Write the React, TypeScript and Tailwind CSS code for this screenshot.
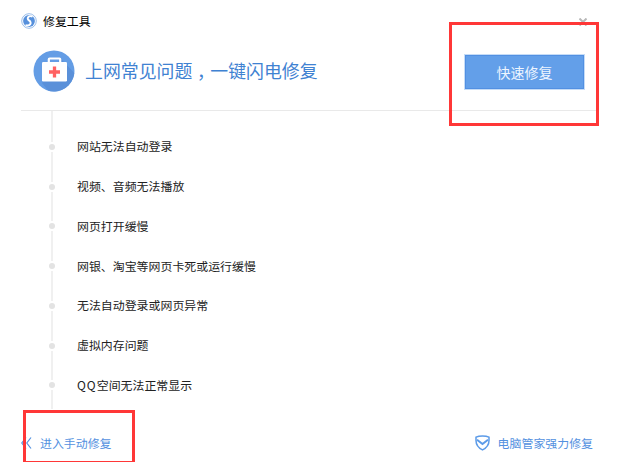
const issues = [
  '网站无法自动登录',
  '视频、音频无法播放',
  '网页打开缓慢',
  '网银、淘宝等网页卡死或运行缓慢',
  '无法自动登录或网页异常',
  '虚拟内存问题',
  'QQ空间无法正常显示',
];

function BrowserLogo() {
  return (
    <svg className="h-4 w-4 shrink-0" viewBox="0 0 16 16" fill="none">
      <circle cx="8" cy="8" r="7.3" stroke="#8db6e8" strokeWidth="0.9" />
      <circle cx="8" cy="8" r="5.9" fill="#5690dc" />
      <path d="M11.500 3.700C7.600 1.900 5.100 5.400 8 7.400c3.400 2.200 1.200 6.200-3.500 4.700" stroke="#fff" strokeWidth="1.900" />
    </svg>
  );
}

function FirstAidIcon() {
  return (
    <svg className="h-[42px] w-[42px] shrink-0" viewBox="0 0 42 42" fill="none">
      <circle cx="21" cy="21" r="20.500" fill="#649de5" />
      <path d="M28 9l13.300 14A20.500 20.500 0 0 1 15 40.600L9 33Z" fill="#5a90d9" />
      <path d="M15.800 13v-3.700q0-.8.8-.8h9.800q.8 0 .8.800V13" stroke="#fff" strokeWidth="2.200" />
      <rect x="9" y="12" width="25" height="19.500" rx="1.200" fill="#fff" />
      <path d="M21.500 16.500v11M16 22h11" stroke="#ff6262" strokeWidth="3.300" />
    </svg>
  );
}

function ShieldIcon() {
  return (
    <svg className="h-4 w-[15px] shrink-0" viewBox="0 0 15 16" fill="none" stroke="#5c9be8">
      <path d="M7.500.9C5 .9 2.700 1.300 1 2.200v3.200c0 4 2.500 7.400 6.500 9.500 4-2.100 6.500-5.500 6.500-9.500V2.200C12.300 1.300 10 .9 7.500.9Z" strokeWidth="1.500" />
      <path d="M2 4.700l5.500 4.300L13 4.700" strokeWidth="2" />
    </svg>
  );
}

export default function App() {
  return (
    <div className="relative flex h-[464px] w-[620px] flex-col overflow-hidden bg-white pl-[21px] pr-[22px] font-['Noto_Sans_CJK_SC',sans-serif] text-[11.93px]">
      <header className="flex h-[42px] items-center justify-between">
        <div className="flex items-center gap-[6px] text-black">
          <BrowserLogo />
          <h1>修复工具</h1>
        </div>
        <svg className="mr-[11px] mt-[2px] h-2 w-2" viewBox="0 0 8 8" stroke="#b8b8b8" strokeWidth="2">
          <path d="M.5.500l7 7M7.500.500l-7 7" />
        </svg>
      </header>

      <section className="flex h-[69px] items-start justify-between border-b border-[#e9e9e9] pl-3">
        <div className="flex items-center gap-[10px] pt-2">
          <FirstAidIcon />
          <h2 className="-mt-[2px] flex text-[17.9px] text-[#3f82d2]">
            <span>上网常见问题</span>
            <span className="translate-y-[6px] font-['Noto_Sans_CJK_TC',sans-serif]">，</span>
            <span>一键闪电修复</span>
          </h2>
        </div>
        <button className="mr-[14px] mt-[13px] h-[34px] w-[119px] border border-[#5290e2] bg-[#639fe9] text-sm text-[#edf5ff] ring-1 ring-[#c5dcf7]">
          快速修复
        </button>
      </section>

      <ul className="relative h-[298px] pt-[16px]">
        <li className="absolute left-[30px] top-0 h-full w-[2px] bg-[#f0f0f0]" />
        {issues.map((issue) => (
          <li key={issue} className="relative flex h-[39.75px] items-center text-[#222]">
            <span className="ml-[26px] flex h-[10px] w-[10px] items-center justify-center bg-white">
              <span className="h-[6px] w-[6px] rounded-full bg-[#e3e3e3]" />
            </span>
            <span className="-mt-px ml-5">
              {issue.startsWith('QQ') ? (
                <>
                  <span className="tracking-[1px]">QQ</span>
                  {issue.slice(2)}
                </>
              ) : (
                issue
              )}
            </span>
          </li>
        ))}
      </ul>

      <footer className="flex h-[53px] items-center justify-between pr-[5px] pt-[14px] text-[#5491df]">
        <a className="flex items-center gap-[8px]">
          <svg className="h-[12px] w-[11px]" viewBox="0 0 11 12" fill="none" stroke="currentColor" strokeWidth="1.200">
            <path d="M5 .5L.8 6 5 11.500M10 .5L5.800 6l4.200 5.500" />
          </svg>
          进入手动修复
        </a>
        <a className="flex items-center gap-2">
          <ShieldIcon />
          电脑管家强力修复
        </a>
      </footer>

      <div className="absolute left-[449px] top-[22px] h-[104px] w-[150px] border-3 border-[#ff3737]" />
      <div className="absolute left-[23px] top-[410px] h-[52px] w-[112px] border-3 border-b border-[#ff3737]" />
    </div>
  );
}
